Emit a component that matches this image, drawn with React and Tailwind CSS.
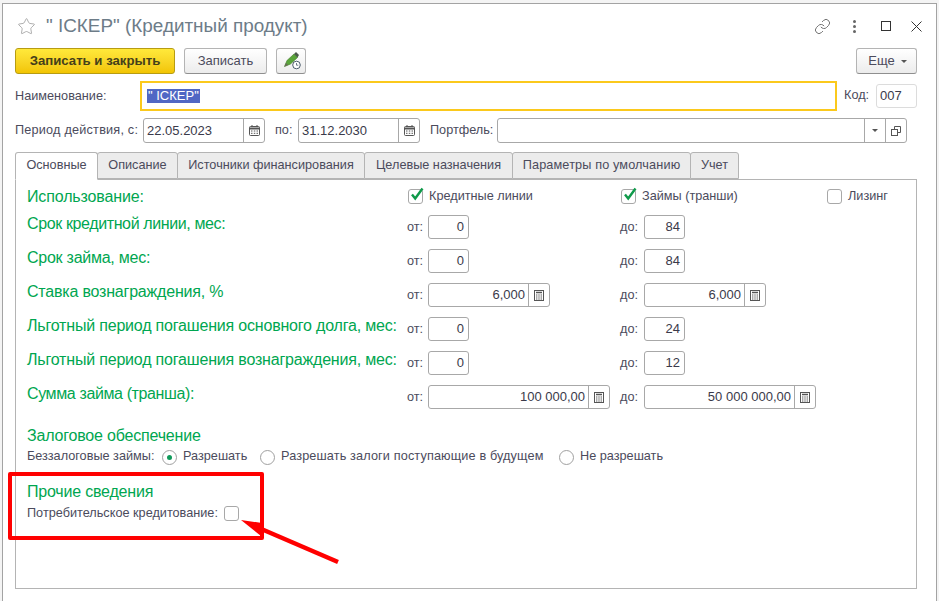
import React from "react";
import { Star, Link } from "lucide-react";

const Cal = () => (
  <svg width="11" height="11" viewBox="0 0 11 11" fill="none">
    <rect x="0.5" y="1.5" width="10" height="9" rx="1" stroke="#555" />
    <path d="M0.5 3.5h10" stroke="#555" strokeWidth="2" />
    <path d="M3 0v2M8 0v2" stroke="#555" />
    <path d="M2 6h1.5M4.8 6h1.5M7.5 6h1.5M2 8.3h1.5M4.8 8.3h1.5M7.5 8.3h1.5" stroke="#555" />
  </svg>
);

const Calc = () => (
  <svg width="10" height="11" viewBox="0 0 10 11" fill="none">
    <rect x="0.5" y="0.5" width="9" height="10" stroke="#555" />
    <path d="M2 2.5h6" stroke="#555" strokeWidth="1.5" />
    <path d="M2 5h1.4M4.3 5h1.4M6.6 5h1.4M2 7h1.4M4.3 7h1.4M6.6 7h1.4M2 9h1.4M4.3 9h1.4M6.6 9h1.4" stroke="#555" />
  </svg>
);

const Num = ({ w, v }) => (
  <div className={`${w} h-6 border border-[#a8a8a8] rounded-[3px] bg-white flex items-center justify-end pr-1 text-[#3a3a4a] text-[13px]`}>{v}</div>
);

const NumCalc = ({ w, v }) => (
  <div className={`${w} h-6 border border-[#a8a8a8] rounded-[3px] bg-white flex items-stretch text-[#3a3a4a] text-[13px]`}>
    <div className="flex-1 flex items-center justify-end pr-[3px]">{v}</div>
    <div className="w-[21px] border-l border-[#a8a8a8] flex items-center justify-center"><Calc /></div>
  </div>
);

const Check = ({ on }) => (
  <div className="relative w-[15px] h-[15px] border border-[#a8a8a8] rounded-[3px] bg-white shrink-0">
    {on && (
      <svg className="absolute left-[1px] -top-[3px]" width="14" height="15" viewBox="0 0 14 15" fill="none">
        <path d="M2 7.5l3.2 4L12.5 1.5" stroke="#0f9a4a" strokeWidth="2.4" />
      </svg>
    )}
  </div>
);

const Radio = ({ on }) => (
  <div className="w-[15px] h-[15px] rounded-full border border-[#a0a0a0] bg-white flex items-center justify-center shrink-0">
    {on && <div className="w-[5px] h-[5px] rounded-full bg-[#0f9a5a]" />}
  </div>
);

const Row = ({ label, track, left, right }) => (
  <div className="grid grid-cols-[380px_216px_1fr] h-6 items-center">
    <div className={`text-[16px] text-[#00a650] leading-none pb-[6px] whitespace-nowrap ${track}`}>{label}</div>
    <div className="flex items-center">
      <span className="w-[21px] pt-[2px]">от:</span>
      {left}
    </div>
    <div className="flex items-center -ml-[3px]">
      <span className="w-[24px] pt-[2px]">до:</span>
      {right}
    </div>
  </div>
);

const Tab = ({ w, active, children, track = "" }) => (
  <div className={`${w} h-[27px] border border-[#b4b4b4] rounded-t-[3px] flex items-center justify-center -mr-px ${track} ${active ? "bg-white border-b-white relative z-10 h-[28px] -mb-px self-start" : "bg-[#ececec]"}`}>
    {children}
  </div>
);

const Btn = ({ w, children, extra = "" }) => (
  <div className={`${w} h-[26px] border border-[#b4b4b4] border-b-[#8f8f8f] rounded-[3px] bg-gradient-to-b from-white to-[#ececec] flex items-center justify-center ${extra}`}>
    {children}
  </div>
);

export default function App() {
  return (
    <div className="relative w-[939px] h-[601px] overflow-hidden bg-[#f4f4f4] pt-[3px] pl-[2px] pr-[2px] text-[12.7px] text-[#4b4b5c] font-['Liberation_Sans',Arial,sans-serif]">
      <div className="h-full bg-white border-l border-t border-r border-[#a3a3a3] pl-3 pr-[19px]">
        {/* Title */}
        <div className="h-[43px] flex items-center -mr-[19px] pt-[1px]">
          <Star size={19} strokeWidth={1} className="ml-[2px] text-[#9a9a9a]" />
          <div className="ml-[10px] text-[18.9px] text-[#6d7c88] leading-none">" ІСКЕР" (Кредитный продукт)</div>
          <div className="ml-auto flex items-center">
            <Link size={17} strokeWidth={1.3} className="text-[#666] mr-[22px]" />
            <div className="flex flex-col gap-[2px] mr-[25px]">
              <div className="w-[3px] h-[3px] rounded-full bg-[#666]" />
              <div className="w-[3px] h-[3px] rounded-full bg-[#666]" />
              <div className="w-[3px] h-[3px] rounded-full bg-[#666]" />
            </div>
            <div className="w-[10px] h-[10px] border-[1.5px] border-[#333] mr-[20px]" />
            <svg width="11" height="11" viewBox="0 0 11 11" fill="none" className="mr-[14px]">
              <path d="M0.5 0.5l10 10M10.5 0.5l-10 10" stroke="#333" />
            </svg>
          </div>
        </div>
        {/* Toolbar */}
        <div className="flex items-center h-[27px]">
          <div className="w-40 h-[26px] rounded-[3px] border border-[#b79c12] bg-gradient-to-b from-[#ffe93a] to-[#f2c500] flex items-center justify-center font-bold text-[13.2px] text-[#45401a]">
            Записать и закрыть
          </div>
          <Btn w="w-[83px]" extra="ml-[9px] text-[13px]">Записать</Btn>
          <Btn w="w-[30px]" extra="ml-[9px]">
            <svg width="19" height="19" viewBox="0 0 19 19" fill="none">
              <path d="M2.5 15.5L5 9.5L12 3l3.5 3.5L8.5 13z" fill="#5aa53a" stroke="#3d7a24" strokeWidth="0.6" />
              <path d="M12 3l2-2 3 3-1.5 2.5z" fill="#4b5a4a" />
              <path d="M2.5 15.5L4 12l2 2z" fill="#6a6a5a" />
              <circle cx="14.5" cy="14" r="3.8" fill="#fff" stroke="#4a5a6a" />
              <path d="M14.5 12v2.2h1.8" stroke="#4a5a6a" strokeWidth="0.8" />
            </svg>
          </Btn>
          <Btn w="w-[61px]" extra="ml-auto gap-[6px] pl-[2px] text-[13px]">
            <span>Еще</span>
            <span className="w-0 h-0 border-x-[3px] border-x-transparent border-t-[3px] border-t-[#555] mt-[1px]" />
          </Btn>
        </div>
        {/* Name row */}
        <div className="flex items-center h-[30px] mt-[7px]">
          <span className="w-[125px] pt-[1px]">Наименование:</span>
          <div className="w-[697px] h-[30px] border-2 border-[#fbc91c] flex items-center pl-[5px] text-[13px]">
            <span className="bg-[#5067c4] text-white px-[1px] leading-[14px]">" ІСКЕР"</span>
          </div>
          <span className="ml-[7px]">Код:</span>
          <div className="ml-auto w-[41px] h-6 border border-[#dcdcdc] rounded-[3px] flex items-center pl-[3px] text-[13px] text-[#3a3a4a]">007</div>
        </div>
        {/* Period row */}
        <div className="flex items-center h-[25px] mt-[7px]">
          <span className="w-[128px] tracking-[0.2px]">Период действия, с:</span>
          <div className="w-[122px] h-[25px] border border-[#a8a8a8] rounded-[3px] flex items-stretch text-[13px] text-[#3a3a4a]">
            <div className="flex-1 flex items-center pl-[3px]">22.05.2023</div>
            <div className="w-[21px] border-l border-[#a8a8a8] flex items-center justify-center"><Cal /></div>
          </div>
          <span className="ml-[10px] w-[23px]">по:</span>
          <div className="w-[122px] h-[25px] border border-[#a8a8a8] rounded-[3px] flex items-stretch text-[13px] text-[#3a3a4a]">
            <div className="flex-1 flex items-center pl-[3px]">31.12.2030</div>
            <div className="w-[21px] border-l border-[#a8a8a8] flex items-center justify-center"><Cal /></div>
          </div>
          <span className="ml-[10px] w-[67px]">Портфель:</span>
          <div className="w-[410px] h-[25px] border border-[#a8a8a8] rounded-[3px] flex items-stretch">
            <div className="flex-1" />
            <div className="w-[21px] border-l border-[#a8a8a8] flex items-center justify-center">
              <span className="w-0 h-0 border-x-[3px] border-x-transparent border-t-[3px] border-t-[#555]" />
            </div>
            <div className="w-[21px] border-l border-[#a8a8a8] flex items-center justify-center">
              <svg width="10" height="10" viewBox="0 0 10 10" fill="none">
                <path d="M3.5 3V0.5h6v6H7" stroke="#555" />
                <rect x="0.5" y="3.5" width="6" height="6" stroke="#555" />
              </svg>
            </div>
          </div>
        </div>
        {/* Tabs */}
        <div className="flex mt-[9px] h-[27px] items-end">
          <Tab w="w-[83px]" active>Основные</Tab>
          <Tab w="w-[81px]">Описание</Tab>
          <Tab w="w-[188px]">Источники финансирования</Tab>
          <Tab w="w-[149px]">Целевые назначения</Tab>
          <Tab w="w-[179px]" track="tracking-[0.13px]">Параметры по умолчанию</Tab>
          <Tab w="w-[49px]">Учет</Tab>
        </div>
        {/* Panel */}
        <div className="h-[410px] border border-[#b4b4b4] pl-[11px] pt-[5px]">
          <div className="flex flex-col gap-[10px]">
            <div className="grid grid-cols-[381px_213px_206px_1fr] h-6 items-center -mb-[4px]">
              <div className="text-[16px] text-[#00a650] leading-none tracking-[-0.14px] pb-[1px]">Использование:</div>
              <div className="flex items-center gap-[6px]"><Check on />Кредитные линии</div>
              <div className="flex items-center gap-[6px]"><Check on />Займы (транши)</div>
              <div className="flex items-center gap-[6px]"><Check />Лизинг</div>
            </div>
            <Row label="Срок кредитной линии, мес:" track="tracking-[-0.38px]" left={<Num w="w-[41px]" v="0" />} right={<Num w="w-[41px]" v="84" />} />
            <Row label="Срок займа, мес:" track="tracking-[-0.25px]" left={<Num w="w-[41px]" v="0" />} right={<Num w="w-[41px]" v="84" />} />
            <Row label="Ставка вознаграждения, %" track="tracking-[-0.2px]" left={<NumCalc w="w-[122px]" v="6,000" />} right={<NumCalc w="w-[122px]" v="6,000" />} />
            <Row label="Льготный период погашения основного долга, мес:" track="tracking-[-0.19px]" left={<Num w="w-[41px]" v="0" />} right={<Num w="w-[41px]" v="24" />} />
            <Row label="Льготный период погашения вознаграждения, мес:" track="tracking-[-0.19px]" left={<Num w="w-[41px]" v="0" />} right={<Num w="w-[41px]" v="12" />} />
            <Row label="Сумма займа (транша):" track="tracking-[-0.38px]" left={<NumCalc w="w-[182px]" v="100 000,00" />} right={<NumCalc w="w-[172px]" v="50 000 000,00" />} />
          </div>
          <div className="text-[16px] text-[#00a650] leading-none tracking-[-0.19px] mt-[19px]">Залоговое обеспечение</div>
          <div className="flex items-center h-[20px] mt-[3px]">
            <span className="w-[135px]">Беззалоговые займы:</span>
            <Radio on /><span className="ml-[6px] w-[77px]">Разрешать</span>
            <Radio /><span className="ml-[6px] w-[278px] tracking-[0.13px]">Разрешать залоги поступающие в будущем</span>
            <Radio /><span className="ml-[6px]">Не разрешать</span>
          </div>
          <div className="text-[16px] text-[#00a650] leading-none tracking-[-0.2px] mt-[17px]">Прочие сведения</div>
          <div className="flex items-center h-[20px] mt-[3px]">
            <span className="w-[197px] pt-[1px]">Потребительское кредитование:</span>
            <Check />
          </div>
        </div>
      </div>
      {/* annotation */}
      <div className="absolute left-[8px] top-[472px] w-[256px] h-[68px] border-[4px] border-[#ff0000] rounded-[2px]" />
      <svg className="absolute left-[235px] top-[510px]" width="110" height="60" viewBox="0 0 110 60" fill="none">
        <path d="M103 52L24 18" stroke="#ff0000" strokeWidth="4.5" />
        <path d="M6 10L27 13L26 26Z" fill="#ff0000" />
      </svg>
    </div>
  );
}
